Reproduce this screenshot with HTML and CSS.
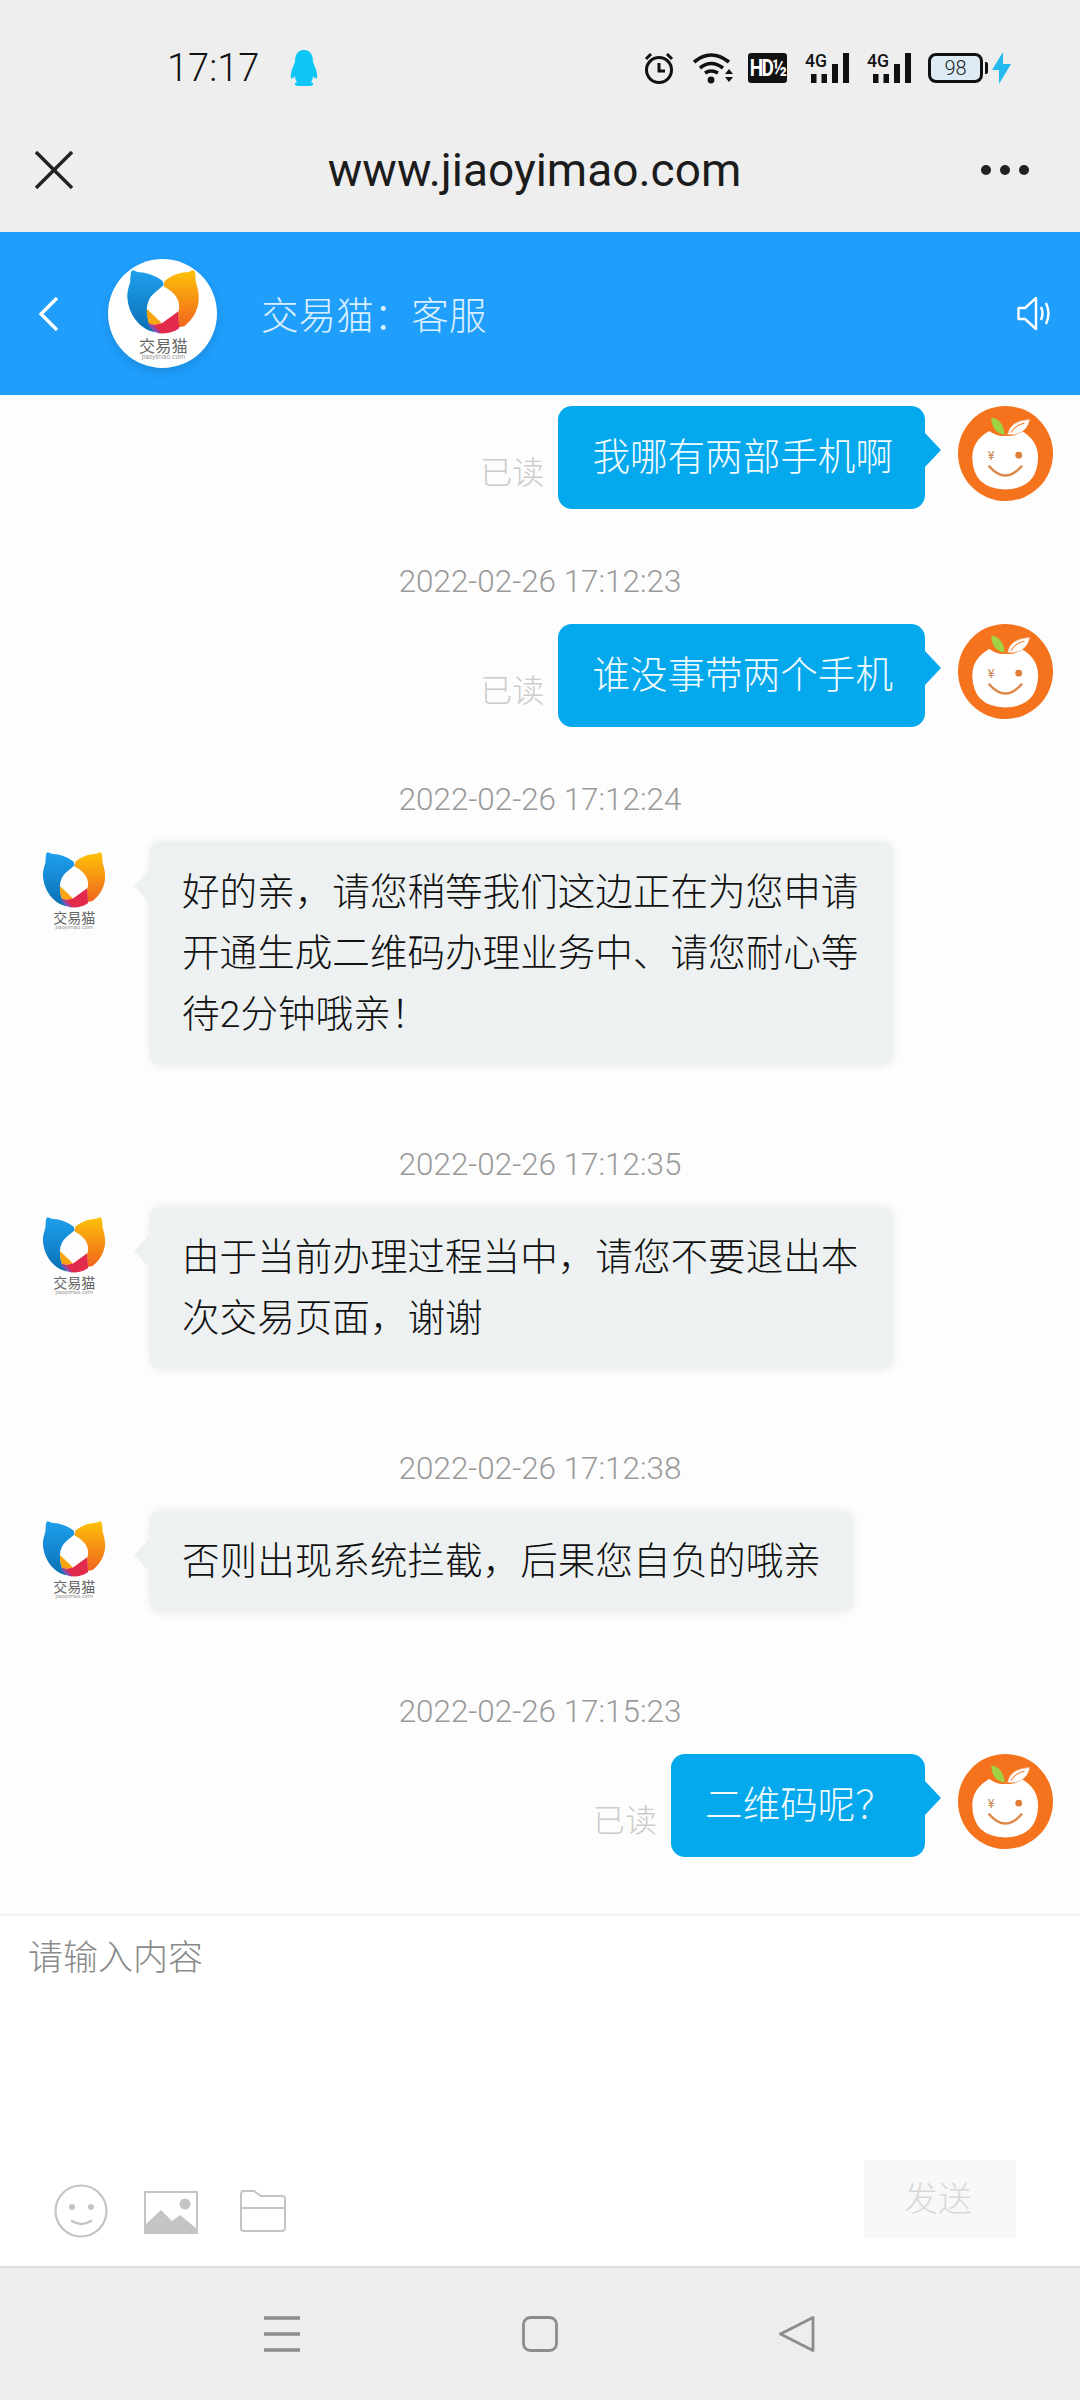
FILE: index.html
```html
<!DOCTYPE html>
<html lang="zh-CN">
<head>
    <meta charset="utf-8">
    <title>www.jiaoyimao.com</title>
    <link rel="stylesheet" href="styles.css">
</head>
<body>
    <svg class="defs" width="0" height="0" aria-hidden="true">
        <defs>
            <linearGradient id="catBlue" x1="0" y1="0" x2="0" y2="1">
                <stop offset="0" stop-color="#1fa0ee"/>
                <stop offset="1" stop-color="#0b6fb4"/>
            </linearGradient>
            <linearGradient id="catOrange" x1="0" y1="0" x2="0" y2="1">
                <stop offset="0" stop-color="#fdc208"/>
                <stop offset="1" stop-color="#f1641e"/>
            </linearGradient>
            <symbol id="catLogo" viewBox="60 55 206 250">
                <path fill="url(#catBlue)" d="M82 61 Q95 68 110 67 Q142 74 162 90 L165 101 L138 124 Q120 140 119 166 Q120 190 127 212 L142 230 C100 222 68 182 66 132 C66 112 73 100 74 90 C75 78 74 60 82 61 Z"/>
                <path fill="url(#catOrange)" d="M244 61 Q231 68 216 67 Q190 72 167 90 L165 105 Q190 118 200 135 Q212 155 204 175 L205 216 L221 213 C245 195 262 165 260 132 C260 112 253 100 252 90 C251 78 252 60 244 61 Z"/>
                <path fill="#f9a512" d="M119 166 L160 205 L127 212 Q118 190 119 166 Z"/>
                <path fill="#e22a4c" d="M127 212 L160 205 L204 173 L207 219 C195 228 180 233 163 233 C148 233 136 225 127 212 Z"/>
                <path fill="#8d4aa8" d="M122 205 L136 209 L158 233 C142 232 130 222 122 205 Z"/>
                <text x="164" y="283" class="logo-cn">交易猫</text>
                <text x="164" y="301" class="logo-en">jiaoyimao.com</text>
            </symbol>
            <symbol id="orangeFace" viewBox="58 38 280 280">
                <circle cx="198" cy="178" r="140" fill="#f5731c"/>
                <path fill="#fff" d="M150 112 Q176 130 198 126 Q226 130 246 112 Q294 140 294 190 Q292 282 197 284 Q102 282 100 190 Q100 140 150 112 Z"/>
                <path fill="#9fd244" d="M156 72 Q190 76 196 122 Q158 118 156 72 Z"/>
                <path fill="#fff" stroke="#f0a878" stroke-width="2" d="M204 122 Q212 80 270 78 Q258 128 204 122 Z"/>
                <path fill="none" stroke="#f5731c" stroke-width="3" d="M214 116 Q228 94 254 88"/>
                <text x="156" y="196" class="face-yen">¥</text>
                <circle cx="237" cy="183" r="10" fill="#dd7d38"/>
                <path fill="none" stroke="#dd8a4c" stroke-width="7" stroke-linecap="round" d="M150 216 Q197 270 245 216"/>
            </symbol>
        </defs>
    </svg>

    <div class="status-bar">
        <span class="clock">17:17</span>
        <svg class="qq" width="30" height="36" viewBox="0 0 30 36">
            <path fill="#0fc6f5" d="M15 0 C8 0 6 6 6 12 C4 17 1 23 2 28 C3 29 5 28 6 26 C6 29 7 31 8 32 C5 33 5 36 9 36 L21 36 C25 36 25 33 22 32 C23 31 24 29 24 26 C25 28 27 29 28 28 C29 23 26 17 24 12 C24 6 22 0 15 0 Z"/>
        </svg>
        <div class="status-icons">
            <svg width="30" height="32" viewBox="0 0 30 32">
                <circle cx="15" cy="18" r="12.5" fill="none" stroke="#111" stroke-width="3"/>
                <path fill="none" stroke="#111" stroke-width="3" d="M15 11 V19 H21 M2 7 L7 2 M28 7 L23 2"/>
            </svg>
            <svg class="ic-wifi" width="41" height="32" viewBox="0 0 41 32">
                <path fill="none" stroke="#111" stroke-width="3.6" d="M1 10 Q18 -4 36 10 M7 16 Q18 7 30 16 M12 21 Q18 17 25 21"/>
                <circle cx="18" cy="28" r="3.4" fill="#111"/>
                <path fill="#111" d="M36 17 L40 22 H32 Z M32 25 H40 L36 30 Z"/>
            </svg>
            <div class="hd-badge"><span class="hd-text">HD½</span></div>
            <svg class="ic-sig" width="44" height="34" viewBox="0 -4 44 34">
                <text x="0" y="14" class="sig-text" textLength="22" lengthAdjust="spacingAndGlyphs">4G</text>
                <path fill="#111" d="M6 21 H11.5 V30 H6 Z M16.5 21 H22 V30 H16.5 Z M27 11 H33 V30 H27 Z M38 0 H44 V30 H38 Z"/>
            </svg>
            <svg class="ic-sig" width="44" height="34" viewBox="0 -4 44 34">
                <text x="0" y="14" class="sig-text" textLength="22" lengthAdjust="spacingAndGlyphs">4G</text>
                <path fill="#111" d="M6 21 H11.5 V30 H6 Z M16.5 21 H22 V30 H16.5 Z M27 11 H33 V30 H27 Z M38 0 H44 V30 H38 Z"/>
            </svg>
            <div class="battery"><span class="battery-level">98</span></div>
            <svg class="ic-bolt" width="19" height="32" viewBox="0 0 19 32">
                <path fill="#25b9ef" d="M11 0 L0 18 H7 L7 32 L19 12 H11 Z"/>
            </svg>
        </div>
    </div>

    <div class="browser-bar">
        <svg width="38" height="38" viewBox="0 0 38 38">
            <path fill="none" stroke="#222" stroke-width="3.4" d="M1 1 L37 37 M37 1 L1 37"/>
        </svg>
        <span class="url">www.jiaoyimao.com</span>
        <svg width="50" height="12" viewBox="0 0 50 12">
            <circle cx="6" cy="6" r="5" fill="#222"/>
            <circle cx="25" cy="6" r="5" fill="#222"/>
            <circle cx="44" cy="6" r="5" fill="#222"/>
        </svg>
    </div>

    <header class="chat-header">
        <svg width="21" height="34" viewBox="0 0 21 34">
            <path fill="none" stroke="#fff" stroke-width="3.4" d="M19 1 L3 17 L19 33"/>
        </svg>
        <div class="shop-logo">
            <svg width="76" height="92"><use href="#catLogo"/></svg>
        </div>
        <span class="shop-name">交易猫：客服</span>
        <svg class="speaker" width="35" height="35" viewBox="0 0 35 35">
            <path fill="none" stroke="#fff" stroke-width="2.4" stroke-linejoin="round" d="M1.5 12 H8 L19 2 V33 L8 23 H1.5 Z"/>
            <path fill="none" stroke="#fff" stroke-width="2.4" d="M24 11 Q27 17.5 24 24 M29 7 Q34 17.5 29 28"/>
        </svg>
    </header>

    <main class="chat">
        <div class="msg msg-me">
            <span class="read-mark">已读</span>
            <div class="bubble bubble-me">我哪有两部手机啊</div>
            <svg class="avatar-me"><use href="#orangeFace"/></svg>
        </div>
        <div class="time gap-me">2022-02-26 17:12:23</div>
        <div class="msg msg-me">
            <span class="read-mark">已读</span>
            <div class="bubble bubble-me">谁没事带两个手机</div>
            <svg class="avatar-me"><use href="#orangeFace"/></svg>
        </div>
        <div class="time gap-me">2022-02-26 17:12:24</div>
        <div class="msg">
            <svg class="avatar-shop"><use href="#catLogo"/></svg>
            <div class="bubble bubble-shop">好的亲，请您稍等我们这边正在为您申请开通生成二维码办理业务中、请您耐心等待2分钟哦亲！</div>
        </div>
        <div class="time gap-shop">2022-02-26 17:12:35</div>
        <div class="msg">
            <svg class="avatar-shop"><use href="#catLogo"/></svg>
            <div class="bubble bubble-shop">由于当前办理过程当中，请您不要退出本次交易页面，谢谢</div>
        </div>
        <div class="time gap-shop">2022-02-26 17:12:38</div>
        <div class="msg">
            <svg class="avatar-shop"><use href="#catLogo"/></svg>
            <div class="bubble bubble-shop">否则出现系统拦截，后果您自负的哦亲</div>
        </div>
        <div class="time gap-shop">2022-02-26 17:15:23</div>
        <div class="msg msg-me">
            <span class="read-mark">已读</span>
            <div class="bubble bubble-me">二维码呢？</div>
            <svg class="avatar-me"><use href="#orangeFace"/></svg>
        </div>
    </main>

    <section class="composer">
        <div class="placeholder">请输入内容</div>
        <div class="composer-tools">
            <svg width="54" height="54" viewBox="0 0 54 54">
                <circle cx="27" cy="27" r="25.5" fill="none" stroke="#c4c4c4" stroke-width="2.2"/>
                <circle cx="18" cy="23" r="3" fill="#c4c4c4"/>
                <circle cx="37" cy="23" r="3" fill="#c4c4c4"/>
                <path fill="none" stroke="#c4c4c4" stroke-width="2.6" stroke-linecap="round" d="M18 37 Q27 43 37 37"/>
            </svg>
            <svg class="tool-image" width="54" height="43" viewBox="0 0 54 43">
                <rect x="1" y="1" width="52" height="41" fill="none" stroke="#c4c4c4" stroke-width="2"/>
                <circle cx="41" cy="13" r="5.5" fill="#c4c4c4"/>
                <path fill="#c4c4c4" d="M1 42 V34 L17 19 L28 30 L36 24 L53 38 V42 Z"/>
            </svg>
            <svg class="tool-folder" width="46" height="42" viewBox="0 0 46 42">
                <path fill="none" stroke="#c4c4c4" stroke-width="2" stroke-linejoin="round" d="M4 1 H14 L21 6 H42 Q45 6 45 9 V38 Q45 41 42 41 H4 Q1 41 1 38 V4 Q1 1 4 1 Z M1 18 H45"/>
            </svg>
            <button class="send-btn">发送</button>
        </div>
    </section>

    <nav class="nav-bar">
        <svg width="36" height="36" viewBox="0 0 36 36">
            <path fill="none" stroke="#8c8c8c" stroke-width="3.4" d="M0 2 H36 M0 18 H36 M0 34 H36"/>
        </svg>
        <svg width="36" height="36" viewBox="0 0 36 36">
            <rect x="1.5" y="1.5" width="33" height="33" rx="7" fill="none" stroke="#8c8c8c" stroke-width="2.8"/>
        </svg>
        <svg width="36" height="36" viewBox="0 0 36 36">
            <path fill="none" stroke="#8c8c8c" stroke-width="2.8" stroke-linejoin="round" d="M34 1.5 V34.5 L1.5 18 Z"/>
        </svg>
    </nav>
</body>
</html>
```

FILE: styles.css
```css
html, body {
    margin: 0;
    padding: 0;
}
body {
    width: 1080px;
    height: 2400px;
    display: flex;
    flex-direction: column;
    overflow: hidden;
    font-family: Roboto, "Noto Sans CJK SC", sans-serif;
    background-color: #fdfdfd;
}
.defs {
    flex: none;
}
.status-bar {
    height: 80px;
    padding: 28px 69px 0 167px;
    display: flex;
    align-items: center;
    background-color: #eeeeee;
}
.clock {
    font-size: 38px;
    font-weight: 300;
    color: #111;
}
.qq {
    margin-left: 30px;
}
.status-icons {
    margin-left: auto;
    display: flex;
    align-items: center;
}
.ic-wifi {
    margin-left: 19px;
}
.hd-badge {
    width: 39px;
    height: 30px;
    margin-left: 14px;
    border-radius: 3px;
    background-color: #111;
    display: flex;
    align-items: center;
    justify-content: center;
}
.hd-text {
    display: block;
    font-size: 19px;
    font-weight: 700;
    line-height: 20px;
    letter-spacing: -1.5px;
    color: #fff;
    transform: scaleY(1.3);
}
.ic-sig {
    margin: -4px 0 0 18px;
}
.sig-text {
    font-size: 18px;
    font-weight: 500;
    fill: #111;
}
.battery {
    width: 55px;
    height: 30px;
    margin-left: 17px;
    box-sizing: border-box;
    border: 3px solid #111;
    border-radius: 8px;
    background-color: #dcebf5;
    display: flex;
    align-items: center;
    justify-content: center;
    position: relative;
}
.battery::after {
    content: "";
    position: absolute;
    right: -8px;
    top: 6px;
    width: 3px;
    height: 12px;
    background-color: #111;
    border-radius: 0 2px 2px 0;
}
.battery-level {
    font-size: 20px;
    font-weight: 300;
    color: #222;
}
.ic-bolt {
    margin-left: 9px;
}
.browser-bar {
    height: 124px;
    padding: 0 50px 0 35px;
    display: flex;
    align-items: center;
    justify-content: space-between;
    background-color: #eeeeee;
}
.url {
    font-size: 46px;
    color: #1c1c1c;
    margin-left: 16px;
}
.chat-header {
    height: 163px;
    padding: 0 28px 0 38px;
    display: flex;
    align-items: center;
    background-color: #1f9efc;
}
.shop-logo {
    width: 109px;
    height: 109px;
    margin-left: 49px;
    border-radius: 50%;
    background-color: #fff;
    box-shadow: 0 4px 10px rgba(0, 0, 0, 0.12);
    display: flex;
    align-items: center;
    justify-content: center;
}
.logo-cn {
    font-size: 44px;
    fill: #666;
    text-anchor: middle;
}
.logo-en {
    font-size: 18px;
    fill: #999;
    text-anchor: middle;
}
.face-yen {
    font-size: 38px;
    fill: #c98a5a;
    text-anchor: middle;
}
.shop-name {
    margin-left: 44px;
    padding-bottom: 2px;
    font-size: 37.6px;
    font-weight: 300;
    color: #d9efff;
}
.speaker {
    margin-left: auto;
}
.chat {
    flex: 1;
    padding-top: 11px;
    overflow: hidden;
    background-color: #fdfdfd;
}
.msg {
    display: flex;
    align-items: flex-start;
    padding: 0 27px 0 41px;
}
.msg-me {
    justify-content: flex-end;
}
.time {
    height: 40px;
    line-height: 42px;
    margin-bottom: 23px;
    text-align: center;
    font-size: 31.4px;
    font-weight: 300;
    color: #9a9a9a;
}
.gap-me {
    margin-top: 52px;
}
.gap-shop {
    margin-top: 79px;
}
.read-mark {
    margin: 47px 14px 0 0;
    line-height: 40px;
    font-size: 32px;
    font-weight: 300;
    color: #cccccc;
}
.bubble {
    position: relative;
    font-size: 37.6px;
    font-weight: 300;
}
.bubble::after {
    content: "";
    position: absolute;
    top: 27px;
    border-top: 17px solid transparent;
    border-bottom: 17px solid transparent;
}
.bubble-me {
    padding: 20px 32px 21px 34px;
    line-height: 62px;
    border-radius: 14px;
    background-color: #03a9ec;
    color: #f2fbff;
}
.bubble-me::after {
    right: -16px;
    border-left: 16px solid #03a9ec;
}
.bubble-shop {
    max-width: 743px;
    box-sizing: border-box;
    padding: 20px 32px;
    line-height: 61px;
    margin-left: 43px;
    border-radius: 10px;
    background-color: #edf1f2;
    color: #111;
    box-shadow: 0 0 10px rgba(0, 0, 0, 0.08);
}
.bubble-shop::after {
    left: -16px;
    border-right: 16px solid #edf1f2;
}
.avatar-me {
    width: 95px;
    height: 95px;
    margin-left: 33px;
    flex: none;
}
.avatar-shop {
    width: 66px;
    height: 81px;
    margin-top: 8px;
    flex: none;
}
.composer {
    height: 355px;
    box-sizing: border-box;
    border-top: 3px solid #f3f4f4;
    border-bottom: 2px solid #dcdcdc;
    padding: 20px 64px 28px 28px;
    display: flex;
    flex-direction: column;
    justify-content: space-between;
    background-color: #fff;
}
.placeholder {
    font-size: 35px;
    font-weight: 300;
    line-height: 46px;
    color: #8a8a8a;
}
.composer-tools {
    display: flex;
    align-items: flex-end;
    padding-left: 26px;
}
.tool-image {
    margin: 0 0 4px 36px;
}
.tool-folder {
    margin: 0 0 6px 42px;
}
.send-btn {
    width: 152px;
    height: 78px;
    margin-left: auto;
    padding: 0 4px 5px 0;
    border: none;
    font-family: inherit;
    font-size: 34px;
    font-weight: 300;
    color: #d8d8d8;
    background-color: #f8f8f8;
}
.nav-bar {
    height: 132px;
    padding: 0 265px 0 264px;
    display: flex;
    align-items: center;
    justify-content: space-between;
    background-color: #ecedee;
}
```
